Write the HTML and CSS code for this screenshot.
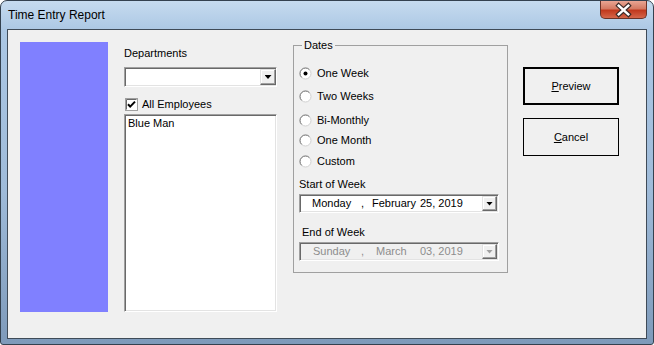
FILE: index.html
```html
<!DOCTYPE html>
<html lang="en">

<head>
  <meta charset="UTF-8">
  <meta name="viewport" content="width=device-width, initial-scale=1.0">
  <title>Time Entry Report</title>
  <link rel="stylesheet" href="styles.css">
</head>

<body>
  <div class="window">
    <div class="titlebar">
      <span class="title">Time Entry Report</span>
      <button class="close" type="button" aria-label="Close">
        <svg width="47" height="18" viewBox="0 0 47 18">
          <path d="M18.5 4.5 L28.5 13.5 M28.5 4.5 L18.5 13.5" stroke="#3b2a28" stroke-width="5" stroke-linecap="square" fill="none" />
          <path d="M18.5 4.5 L28.5 13.5 M28.5 4.5 L18.5 13.5" stroke="#fff" stroke-width="2.6" stroke-linecap="square" fill="none" />
        </svg>
      </button>
    </div>

    <div class="client">
      <div class="logo"></div>

      <div class="employees">
        <label class="dept-label" for="dept">Departments</label>
        <div class="field combo" id="dept">
          <span class="drop"></span>
        </div>
        <div class="all-row">
          <svg class="check" width="13" height="13" viewBox="0 0 13 13">
            <rect x="0.5" y="0.5" width="12" height="12" fill="#fff" stroke="#a0a0a0" />
            <path d="M1.5 11.5V1.5H11.5" stroke="#696969" fill="none" />
            <path d="M3 6.2 L5.2 8.6 L10 3.6" stroke="#000" stroke-width="2" fill="none" />
          </svg>
          <span>All Employees</span>
        </div>
        <div class="field listbox">
          <div>Blue Man</div>
        </div>
      </div>

      <fieldset class="dates">
        <legend>Dates</legend>
        <div class="opt first">
          <svg class="radio" viewBox="0 0 13 13">
            <circle cx="6.5" cy="6.5" r="5.5" fill="#fff" stroke="#d0d0d0" />
            <path d="M2.6 10.4A5.5 5.5 0 0 1 10.4 2.6" fill="none" stroke="#7a7a7a" />
            <circle cx="6.5" cy="6.5" r="2" fill="#000" />
          </svg>
          <span>One Week</span>
        </div>
        <div class="opt gap10">
          <svg class="radio" viewBox="0 0 13 13">
            <circle cx="6.5" cy="6.5" r="5.5" fill="#fff" stroke="#d0d0d0" />
            <path d="M2.6 10.4A5.5 5.5 0 0 1 10.4 2.6" fill="none" stroke="#7a7a7a" />
          </svg>
          <span>Two Weeks</span>
        </div>
        <div class="opt gap11">
          <svg class="radio" viewBox="0 0 13 13">
            <circle cx="6.5" cy="6.5" r="5.5" fill="#fff" stroke="#d0d0d0" />
            <path d="M2.6 10.4A5.5 5.5 0 0 1 10.4 2.6" fill="none" stroke="#7a7a7a" />
          </svg>
          <span>Bi-Monthly</span>
        </div>
        <div class="opt gap7">
          <svg class="radio" viewBox="0 0 13 13">
            <circle cx="6.5" cy="6.5" r="5.5" fill="#fff" stroke="#d0d0d0" />
            <path d="M2.6 10.4A5.5 5.5 0 0 1 10.4 2.6" fill="none" stroke="#7a7a7a" />
          </svg>
          <span>One Month</span>
        </div>
        <div class="opt gap8">
          <svg class="radio" viewBox="0 0 13 13">
            <circle cx="6.5" cy="6.5" r="5.5" fill="#fff" stroke="#d0d0d0" />
            <path d="M2.6 10.4A5.5 5.5 0 0 1 10.4 2.6" fill="none" stroke="#7a7a7a" />
          </svg>
          <span>Custom</span>
        </div>

        <div class="date-label">Start of Week</div>
        <div class="field picker">
          <span class="day">Monday</span>
          <span class="sep">,</span>
          <span class="month">February</span>
          <span class="year">25, 2019</span>
          <span class="drop"></span>
        </div>

        <div class="date-label end">End of Week</div>
        <div class="field picker off">
          <span class="day short">Sunday</span>
          <span class="sep">,</span>
          <span class="month short">March</span>
          <span class="year">03, 2019</span>
          <span class="drop off"></span>
        </div>
      </fieldset>

      <div class="actions">
        <button class="btn default" type="button"><u>P</u>review</button>
        <button class="btn" type="button"><u>C</u>ancel</button>
      </div>
    </div>
  </div>
</body>

</html>
```

FILE: styles.css
```css
* {
  box-sizing: border-box;
}

body {
  margin: 0;
  font: 11px/13px "Liberation Sans", Arial, sans-serif;
  color: #000;
}

.window {
  width: 654px;
  height: 345px;
  display: flex;
  flex-direction: column;
  padding: 0 6px 5px;
  border: 1px solid #34414f;
  border-radius: 7px 7px 3px 3px;
  background: linear-gradient(#c6dbef, #abc7e4 30px, #9fbbd9 55%, #7e9aba);
}

.titlebar {
  height: 28px;
  display: flex;
  align-items: center;
}

.title {
  padding-left: 1px;
  font-size: 12px;
}

.close {
  align-self: flex-start;
  margin-left: auto;
  width: 47px;
  height: 18px;
  padding: 0;
  border: 1px solid #6b3328;
  border-top: 0;
  border-radius: 0 0 5px 5px;
  background: linear-gradient(#e9a593, #d47a63 45%, #c1391e 55%, #d5664a);
  display: flex;
  align-items: center;
  justify-content: center;
}

.client {
  flex: 1;
  display: flex;
  align-items: flex-start;
  padding: 12px 0 0 12px;
  border: 1px solid #3f4b58;
  background: #f0f0f0;
}

.logo {
  width: 88px;
  height: 270px;
  background: #8080ff;
}

/* sunken white box used by combo, list and date pickers */
.field {
  background: #fff;
  border: 1px solid;
  border-color: #a0a0a0 #fff #fff #a0a0a0;
  box-shadow: inset 1px 1px #696969, inset -1px -1px #e3e3e3;
}

.employees {
  width: 153px;
  margin-left: 16px;
  display: flex;
  flex-direction: column;
}

.dept-label {
  margin-top: 5px;
}

.combo {
  margin-top: 7px;
  height: 20px;
  display: flex;
  justify-content: flex-end;
  padding: 1px 0 1px 1px;
}

.drop {
  width: 16px;
  height: 16px;
  display: flex;
  align-items: center;
  justify-content: center;
  background: #f0f0f0;
  border: 1px solid;
  border-color: #e3e3e3 #696969 #696969 #e3e3e3;
  box-shadow: inset -1px -1px #a0a0a0, inset 1px 1px #fff;
}

.drop::after {
  content: "";
  width: 7px;
  height: 4px;
  background: #000;
  clip-path: polygon(0 0, 100% 0, 50% 100%);
}

.drop.off::after {
  background: #a0a0a0;
}

.all-row {
  margin-top: 11px;
  padding-left: 1px;
  display: flex;
  align-items: center;
  gap: 4px;
}

.check {
  display: block;
}

.listbox {
  margin-top: 3px;
  height: 198px;
  padding: 2px 3px;
}

.dates {
  width: 215px;
  min-width: 0;
  margin: -3px 0 0 16px;
  padding: 0 8px 11px 5px;
  border: 1px solid #a0a0a0;
}

.dates legend {
  margin-left: 3px;
  padding: 0 2px;
  line-height: 13px;
}

.opt {
  display: flex;
  align-items: center;
  gap: 5px;
}

.radio {
  width: 13px;
  height: 13px;
  display: block;
}

.opt.first {
  margin-top: 15px;
}

.opt.gap10 {
  margin-top: 10px;
}

.opt.gap11 {
  margin-top: 11px;
}

.opt.gap7 {
  margin-top: 7px;
}

.opt.gap8 {
  margin-top: 8px;
}

.date-label {
  margin-top: 10px;
}

.date-label.end {
  margin-top: 13px;
  padding-left: 3px;
}

.picker {
  margin-top: 3px;
  height: 19px;
  display: flex;
  align-items: center;
  padding: 1px 1px 1px 12px;
}

.picker .day {
  width: 49px;
}

.picker .sep {
  width: 11px;
}

.picker .month {
  width: 48px;
}

.picker .day.short {
  padding-left: 1px;
}

.picker .month.short {
  padding-left: 4px;
}

.picker .drop {
  margin-left: auto;
  width: 15px;
  height: 15px;
}

.picker.off {
  background: #f0f0f0;
  color: #8d8d8d;
}

.actions {
  margin: 25px 0 0 15px;
  display: flex;
  flex-direction: column;
  gap: 13px;
}

.btn {
  width: 96px;
  height: 38px;
  padding: 0;
  border: 1px solid #000;
  background: #f0f0f0;
  font: inherit;
  color: #000;
}

.btn.default {
  border-width: 2px;
}
```
